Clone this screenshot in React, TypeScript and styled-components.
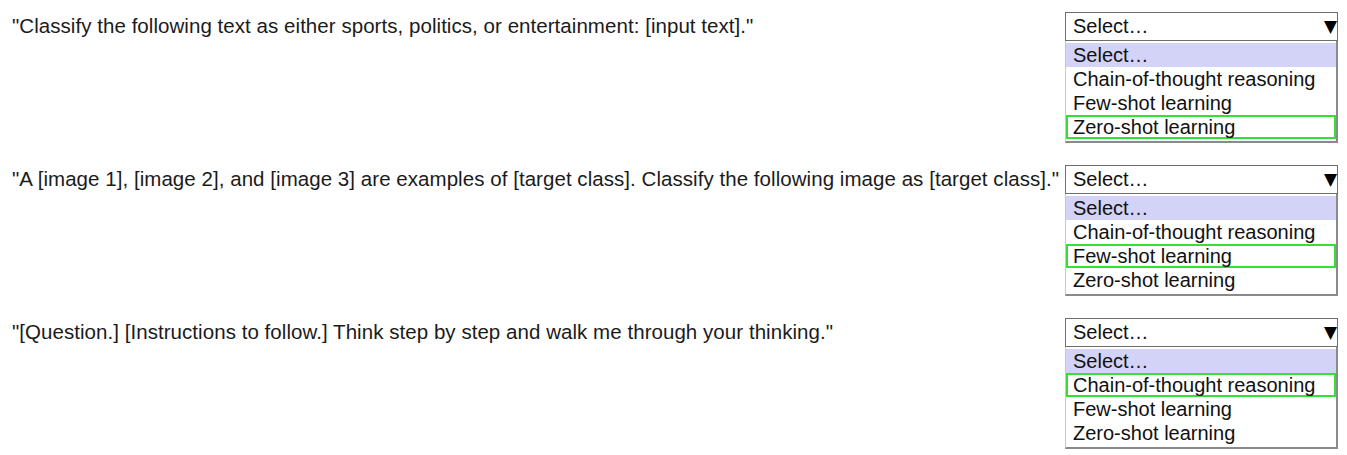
import React from 'react';
import styled, { createGlobalStyle } from 'styled-components';

const GlobalStyle = createGlobalStyle`
  html, body {
    margin: 0;
    padding: 0;
    background: #ffffff;
  }
  body {
    font-family: 'Liberation Sans', Arial, sans-serif;
    color: #1b1b1b;
  }
`;

const Page = styled.div`
  display: flex;
  flex-direction: column;
  gap: 22px;
  padding: 12px 9px 0 12px;
`;

const Row = styled.div`
  display: flex;
  flex-direction: row;
  justify-content: space-between;
  align-items: flex-start;
`;

const Prompt = styled.div`
  font-size: 20.5px;
  line-height: 24px;
  padding-top: 2px;
  letter-spacing: 0.05px;
`;

const Dropdown = styled.div`
  width: 273px;
  display: flex;
  flex-direction: column;
  flex-shrink: 0;
`;

const SelectBox = styled.div`
  height: 27px;
  border: 1px solid #6e6e6e;
  display: flex;
  align-items: center;
  justify-content: space-between;
  padding: 0 0 0 7px;
  font-size: 20px;
  color: #111;
`;

const Arrow = styled.span`
  font-size: 17px;
  line-height: 1;
  color: #000;
  font-family: 'DejaVu Sans', sans-serif;
`;

const List = styled.div`
  display: flex;
  flex-direction: column;
  border-left: 1px solid #c8c8c8;
  border-right: 2px solid #8a8a8a;
  border-bottom: 2px solid #8a8a8a;
  padding: 2px 0 2px;
`;

const Option = styled.div<{ highlighted?: boolean; chosen?: boolean }>`
  height: 24px;
  box-sizing: border-box;
  display: flex;
  align-items: center;
  padding-left: ${({ chosen }) => (chosen ? '5px' : '7px')};
  font-size: 20px;
  color: #111;
  background: ${({ highlighted }) => (highlighted ? '#d3d3f7' : '#ffffff')};
  border: ${({ chosen }) => (chosen ? '2px solid #33e033' : 'none')};
`;

const options = [
  'Select…',
  'Chain-of-thought reasoning',
  'Few-shot learning',
  'Zero-shot learning',
];

const items = [
  {
    text: '"Classify the following text as either sports, politics, or entertainment: [input text]."',
    answer: 'Zero-shot learning',
  },
  {
    text: '"A [image 1], [image 2], and [image 3] are examples of [target class]. Classify the following image as [target class]."',
    answer: 'Few-shot learning',
  },
  {
    text: '"[Question.] [Instructions to follow.] Think step by step and walk me through your thinking."',
    answer: 'Chain-of-thought reasoning',
  },
];

const App = () => {
  return (
    <>
      <GlobalStyle />
      <Page>
        {items.map((item) => (
          <Row key={item.text}>
            <Prompt>{item.text}</Prompt>
            <Dropdown>
              <SelectBox>
                <span>Select…</span>
                <Arrow>▼</Arrow>
              </SelectBox>
              <List>
                {options.map((opt, i) => (
                  <Option key={opt} highlighted={i === 0} chosen={opt === item.answer}>
                    {opt}
                  </Option>
                ))}
              </List>
            </Dropdown>
          </Row>
        ))}
      </Page>
    </>
  );
};

export default App;
